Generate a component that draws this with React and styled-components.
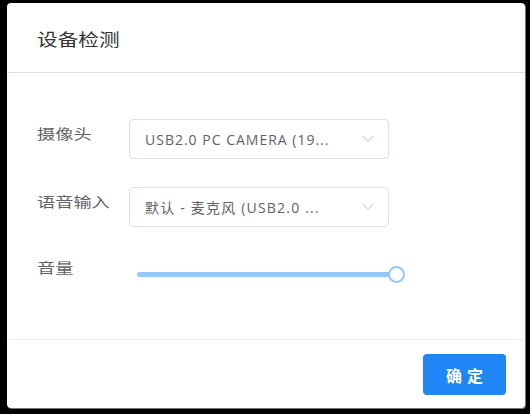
import React from "react";
import styled, { createGlobalStyle } from "styled-components";

const Global = createGlobalStyle`
  html, body { margin: 0; padding: 0; background: #000; }
  body { font-family: "Open Sans", "Noto Sans CJK SC", sans-serif; }
  * { box-sizing: border-box; }
`;

const Screen = styled.div`
  width: 530px;
  height: 414px;
  padding: 3px 5px 6px 7px;
  background: #000;
`;

const Modal = styled.div`
  width: 518px;
  height: 405px;
  background: #fff;
  border-radius: 4px;
  display: flex;
  flex-direction: column;
  box-shadow: 1px 1px 0 #777;
`;

const Header = styled.div`
  height: 70px;
  flex: none;
  display: flex;
  align-items: center;
  padding: 2px 30px 0;
  border-bottom: 1px solid #d9dee6;
`;

const Stretch = styled.span`
  display: inline-block;
  transform: scaleX(${(p) => p.$sx || 1.25});
  transform-origin: left center;
  white-space: nowrap;
`;

const Title = styled.div`
  font-family: "Noto Sans CJK SC", sans-serif;
  font-size: 16.5px;
  color: #333;
`;

const Body = styled.div`
  flex: 1;
  padding: 46px 30px 0;
  display: flex;
  flex-direction: column;
  gap: 28px;
`;

const Row = styled.div`
  display: flex;
  align-items: flex-start;
`;

const Label = styled.div`
  width: 92px;
  flex: none;
  font-family: "Noto Sans CJK SC", sans-serif;
  font-size: 14px;
  line-height: 20px;
  color: #606266;
  margin-top: ${(p) => p.$offset}px;
`;

const Select = styled.div`
  width: 260px;
  height: 40px;
  border: 1px solid #dcdfe6;
  border-radius: 4px;
  display: flex;
  align-items: center;
  padding: 0 14px 0 15px;
  gap: 8px;
`;

const SelectText = styled.div`
  flex: 1;
  font-family: "Open Sans", "Noto Sans CJK SC", sans-serif;
  font-size: 14px;
  letter-spacing: ${(p) => p.$ls}px;
  color: #606266;
  white-space: nowrap;
  overflow: hidden;
`;

const Chevron = () => (
  <svg width="12" height="8" viewBox="0 0 12 8" style={{ flex: "none" }}>
    <path d="M1 1 L6 6.5 L11 1" fill="none" stroke="#c0c4cc" strokeWidth="1" />
  </svg>
);

const SliderWrap = styled.div`
  width: 276px;
  height: 38px;
  padding: 0 8px;
  display: flex;
  align-items: center;
`;

const Track = styled.div`
  position: relative;
  flex: 1;
  height: 5px;
  border-radius: 3px;
  background: #94c8fb;
`;

const Handle = styled.div`
  position: absolute;
  right: -8px;
  top: 50%;
  width: 17px;
  height: 17px;
  margin-top: -8.5px;
  border-radius: 50%;
  background: #fff;
  border: 2px solid #94c8fb;
`;

const Footer = styled.div`
  height: 69px;
  flex: none;
  border-top: 1px solid #ebeef5;
  display: flex;
  justify-content: flex-end;
  align-items: flex-start;
  padding: 14px 19px 0 0;
`;

const Button = styled.button`
  width: 83px;
  height: 41px;
  border: none;
  border-radius: 4px;
  background: #1f86f5;
  color: #fff;
  font-family: "Noto Sans CJK SC", sans-serif;
  font-size: 16px;
  font-weight: 700;
  letter-spacing: 5px;
  padding: 0 0 0 5px;
`;

export default function App() {
  return (
    <>
      <Global />
      <Screen>
        <Modal>
          <Header>
            <Title>
              <Stretch $sx={1.25}>设备检测</Stretch>
            </Title>
          </Header>
          <Body>
            <Row>
              <Label $offset={4}>
                <Stretch $sx={1.3}>摄像头</Stretch>
              </Label>
              <Select>
                <SelectText $ls={1}>USB2.0 PC CAMERA (19...</SelectText>
                <Chevron />
              </Select>
            </Row>
            <Row>
              <Label $offset={4}>
                <Stretch $sx={1.3}>语音输入</Stretch>
              </Label>
              <Select>
                <SelectText $ls={1.2}>默认 - 麦克风 (USB2.0 ...</SelectText>
                <Chevron />
              </Select>
            </Row>
            <Row>
              <Label $offset={2}>
                <Stretch $sx={1.3}>音量</Stretch>
              </Label>
              <SliderWrap>
                <Track>
                  <Handle />
                </Track>
              </SliderWrap>
            </Row>
          </Body>
          <Footer>
            <Button>确定</Button>
          </Footer>
        </Modal>
      </Screen>
    </>
  );
}
